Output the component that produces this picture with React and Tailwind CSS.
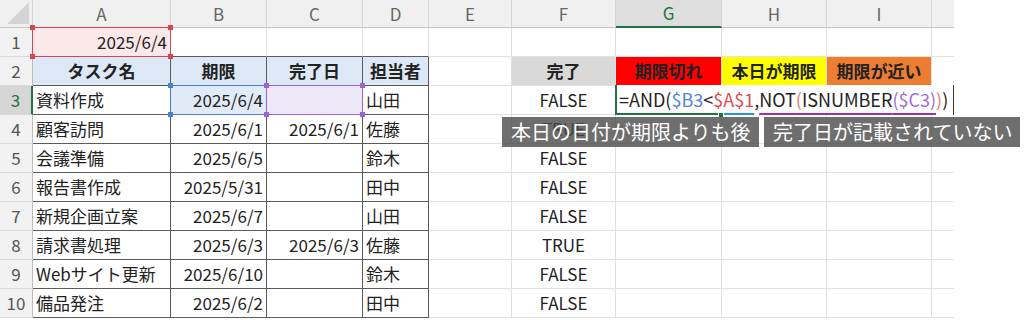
const COLS = ["", "A", "B", "C", "D", "E", "F", "G", "H", "I", ""];

const tasks = [
  ["資料作成", "2025/6/4", "", "山田", "FALSE"],
  ["顧客訪問", "2025/6/1", "2025/6/1", "佐藤", "TRUE"],
  ["会議準備", "2025/6/5", "", "鈴木", "FALSE"],
  ["報告書作成", "2025/5/31", "", "田中", "FALSE"],
  ["新規企画立案", "2025/6/7", "", "山田", "FALSE"],
  ["請求書処理", "2025/6/3", "2025/6/3", "佐藤", "TRUE"],
  ["Webサイト更新", "2025/6/10", "", "鈴木", "FALSE"],
  ["備品発注", "2025/6/2", "", "田中", "FALSE"],
];

const LIGHT_R = "border-r-[#e1e1e1]";
const LIGHT_B = "border-b-[#e1e1e1]";
const DARK_R = "border-r-[#5b5b5b]";
const DARK_B = "border-b-[#5b5b5b]";

function Corners({ color }) {
  return (
    <>
      <span className={`absolute -left-[3px] -top-[3px] w-[5px] h-[5px] z-20 ${color}`} />
      <span className={`absolute -right-[3px] -top-[3px] w-[5px] h-[5px] z-20 ${color}`} />
      <span className={`absolute -left-[3px] -bottom-[3px] w-[5px] h-[5px] z-20 ${color}`} />
      <span className={`absolute -right-[3px] -bottom-[3px] w-[5px] h-[5px] z-20 ${color}`} />
    </>
  );
}

function Formula() {
  return (
    <div className="absolute -left-px -top-px w-[339px] h-[30px] bg-white z-30">
      <div className="absolute left-0 top-0 w-[107px] h-[30px] border-l-2 border-b-2 border-[#1f7244]" />
      <span className="absolute left-[103px] -bottom-[3px] w-[6px] h-[6px] bg-[#1f7244] border border-white" />
      <div className="pl-[4px] leading-[29px] text-[18px] whitespace-nowrap text-[#222]">
        =AND(
        <span className="underline decoration-2 underline-offset-[6px] decoration-[#1c9ad6]">
          <span className="text-[#4f86d8]">$B3</span>&lt;<span className="text-[#e0484c]">$A$1</span>
        </span>
        ,
        <span className="underline decoration-2 underline-offset-[6px] decoration-[#a12ea8]">
          NOT<span className="text-[#e27a74]">(</span>ISNUMBER<span className="text-[#9d6fd6]">($C3)</span>
        </span>
        <span className="text-[#e27a74]">)</span>)
      </div>
      <div className="absolute right-0 top-0 h-full w-px bg-[#333]" />
    </div>
  );
}

function Row({ r }) {
  const cells = [];
  const t = r >= 3 ? tasks[r - 3] : null;
  for (let c = 0; c < 11; c++) {
    let rc = LIGHT_R;
    let bc = LIGHT_B;
    let bg = "bg-white";
    let extra = "";
    let content = null;

    if (c === 0) {
      rc = r === 3 ? "border-r-2 border-r-[#1f7244]" : "border-r-[#bdbdbd]";
      bc = "border-b-[#d9d9d9]";
      bg = r === 3 ? "bg-[#d6d6d6]" : "bg-[#f2f2f2]";
      extra = `justify-center text-[17px] ${r === 3 ? "text-[#1f7244]" : "text-[#555]"}`;
      content = r;
    } else if (c >= 1 && c <= 4) {
      if (r === 1) {
        bc = DARK_B;
      } else {
        rc = DARK_R;
        bc = DARK_B;
      }
    }

    if (c === 10) rc = "border-r-transparent";

    if (r === 1 && c === 1) {
      bg = "bg-[#fbe8e8]";
      extra = "relative justify-end pr-[3px]";
      content = (
        <>
          2025/6/4
          <div className="absolute -inset-px border border-[#d2484c] z-10" />
          <Corners color="bg-[#d2484c]" />
        </>
      );
    }

    if (r === 2) {
      const heads = { 1: "タスク名", 2: "期限", 3: "完了日", 4: "担当者", 6: "完了", 7: "期限切れ", 8: "本日が期限", 9: "期限が近い" };
      if (heads[c]) {
        extra = "justify-center font-bold whitespace-nowrap";
        content = heads[c];
      }
      if (c >= 1 && c <= 4) bg = "bg-[#dce8f5]";
      if (c === 6) bg = "bg-[#d9d9d9]";
      if (c === 7) bg = "bg-[#ff0000]";
      if (c === 8) bg = "bg-[#ffff00]";
      if (c === 9) bg = "bg-[#ed7d31]";
    }

    if (t) {
      if (c === 1) {
        extra = "pl-[3px] whitespace-nowrap";
        content = t[0];
      }
      if (c === 2) {
        extra = "justify-end pr-[3px]";
        content = t[1];
      }
      if (c === 3) {
        extra = "justify-end pr-[3px]";
        content = t[2];
      }
      if (c === 4) {
        extra = "pl-[3px]";
        content = t[3];
      }
      if (c === 6) {
        extra = "justify-center";
        content = t[4];
      }
    }

    if (r === 3 && c === 2) {
      bg = "bg-[#e1eaf7]";
      extra += " relative";
      content = (
        <>
          {content}
          <div className="absolute -inset-px border border-[#4a7fd6] z-10" />
          <Corners color="bg-[#4a7fd6]" />
        </>
      );
    }
    if (r === 3 && c === 3) {
      bg = "bg-[#ede8f8]";
      extra += " relative";
      content = (
        <>
          <div className="absolute -inset-px border border-[#9b63d6] z-10" />
          <Corners color="bg-[#9b63d6]" />
        </>
      );
    }
    if (r === 3 && c === 7) {
      extra += " relative";
      content = <Formula />;
    }

    cells.push(
      <div key={c} className={`flex items-center border-r border-b ${rc} ${bc} ${bg} ${extra}`}>
        {content}
      </div>
    );
  }
  return cells;
}

export default function App() {
  return (
    <div className="relative w-[1024px] h-[320px] bg-white overflow-hidden font-['Noto_Sans_CJK_JP',sans-serif] text-[17px] text-[#222]">
      <div className="grid w-[954px] grid-cols-[33px_138px_96px_96px_66px_83px_104px_106px_105px_105px_22px] grid-rows-[28px_repeat(10,29px)]">
        {COLS.map((l, i) => (
          <div
            key={"h" + i}
            className={`flex items-center justify-center text-[17px] ${
              i === 7 ? "bg-[#dedede] text-[#1f7244] border-b-2 border-b-[#1f7244]" : "bg-[#f0f0f0] text-[#666] border-b border-b-[#c4c4c4]"
            } ${i === 10 ? "" : "border-r border-r-[#d6d6d6]"} ${i === 0 ? "relative" : ""}`}
          >
            {i === 0 ? (
              <svg className="absolute right-[3px] bottom-[3px]" width="22" height="22" viewBox="0 0 22 22">
                <polygon points="22,0 22,22 0,22" fill="#d4d4d4" />
              </svg>
            ) : (
              l
            )}
          </div>
        ))}
        {Array.from({ length: 10 }, (_, k) => (
          <Row key={k} r={k + 1} />
        ))}
      </div>

      <div className="absolute left-[502px] top-[117px] w-[257px] h-[30px] z-40 bg-[#4a4a4a]/80 text-white text-[20px] leading-[30px] pl-[9px] whitespace-nowrap">
        本日の日付が期限よりも後
      </div>
      <div className="absolute left-[764px] top-[117px] w-[256px] h-[30px] z-40 bg-[#4a4a4a]/80 text-white text-[20px] leading-[30px] pl-[9px] whitespace-nowrap">
        完了日が記載されていない
      </div>
    </div>
  );
}
